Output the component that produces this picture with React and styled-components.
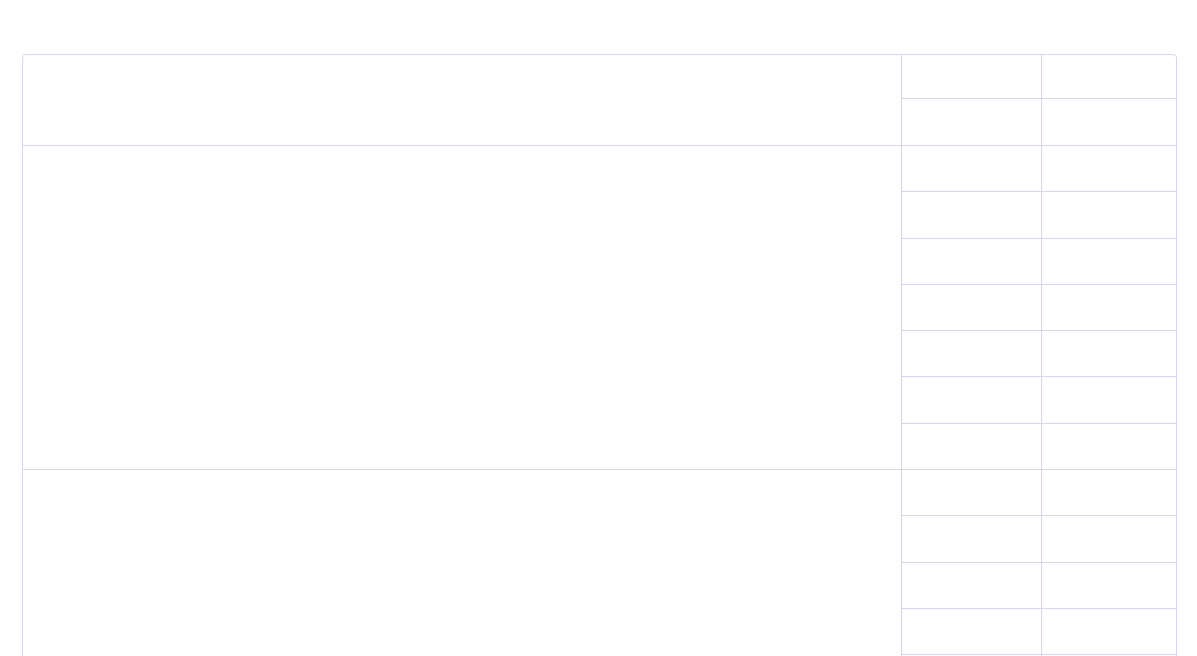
import React from "react";
import styled, { createGlobalStyle } from "styled-components";

const Global = createGlobalStyle`
  html, body { margin: 0; padding: 0; background: #ffffff; }
  body { font-family: "Liberation Sans", Arial, sans-serif; overflow: hidden; }
`;

const Page = styled.div`
  padding: 54px 20px 0 22px;
`;

const Table = styled.table`
  width: 1155px;
  border-collapse: separate;
  border-spacing: 0;
  border: 1px solid #d3d8e8;
  border-radius: 4px;
  table-layout: fixed;
`;

const Cell = styled.td`
  padding: 0;
  height: ${(p) => p.$h}px;
  border-right: ${(p) => (p.$last ? "none" : "1px solid #d3d8e8")};
  border-bottom: 1px solid #d3d8e8;
  vertical-align: top;
`;

const groups = [
  { rows: [43, 46] },
  { rows: [45.3, 45.3, 45.3, 45.3, 45.3, 45.3, 45.3] },
  { rows: [45.3, 45.3, 45.3, 45.3, 45.3] },
];

export default function App() {
  return (
    <>
      <Global />
      <Page>
        <Table>
          <colgroup>
            <col style={{ width: 879 }} />
            <col style={{ width: 140 }} />
            <col />
          </colgroup>
          <tbody>
            {groups.map((g, gi) =>
              g.rows.map((h, ri) => (
                <tr key={`${gi}-${ri}`}>
                  {ri === 0 && <Cell rowSpan={g.rows.length} />}
                  <Cell $h={h} />
                  <Cell $h={h} $last />
                </tr>
              ))
            )}
          </tbody>
        </Table>
      </Page>
    </>
  );
}
